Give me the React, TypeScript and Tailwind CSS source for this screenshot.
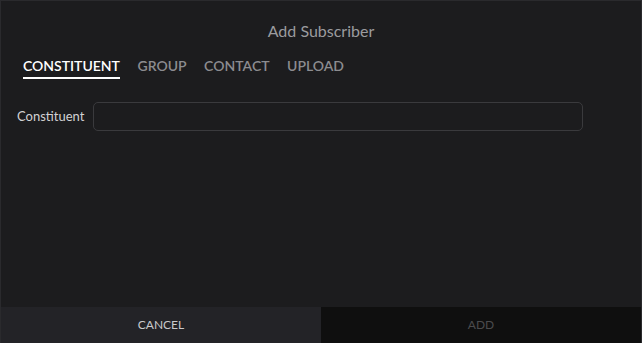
import { useState } from "react";

const tabs = ["CONSTITUENT", "GROUP", "CONTACT", "UPLOAD"];

export default function App() {
    const [active, setActive] = useState(0);

    return (
        <div className="w-[642px] h-[343px] flex flex-col bg-[#1c1c1e] border-l border-t border-r border-[#2a2a2d] font-['Lato',sans-serif] overflow-hidden">
            <div className="flex-1 flex flex-col">
                <h1 className="text-center text-[16px] text-[#9b9b9e] pt-[20px] leading-[19px]">Add Subscriber</h1>

                <div className="flex gap-[17.5px] px-[22px] mt-[17px]">
                    {tabs.map((t, i) => (
                        <button
                            key={t}
                            onClick={() => setActive(i)}
                            className={`text-[14px] font-semibold leading-[17px] pb-[3px] border-b-2 ${
                                i === active ? "text-white border-white" : "text-[#8c8c90] border-transparent"
                            }`}
                        >
                            {t}
                        </button>
                    ))}
                </div>

                <div className="flex items-center gap-[9px] pl-[16px] mt-[23px]">
                    <label className="text-[13px] text-[#d2d2d4]">Constituent</label>
                    <input className="w-[490px] h-[29px] rounded-[5px] border border-[#3a3a3d] bg-transparent outline-none px-2 text-[13px] text-white" />
                </div>
            </div>

            <div className="flex h-[36px]">
                <button className="w-1/2 bg-[#232327] text-[12px] text-[#c9c9cc]">CANCEL</button>
                <button className="w-1/2 bg-[#0f0f0f] text-[12px] text-[#4b4b4d]">ADD</button>
            </div>
        </div>
    );
}
